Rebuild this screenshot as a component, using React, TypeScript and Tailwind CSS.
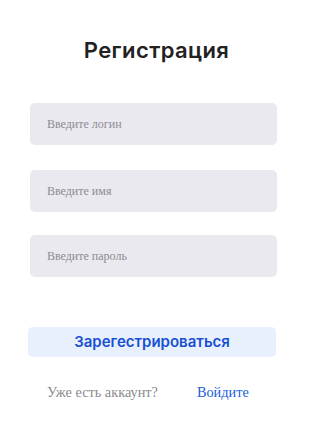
export default function App() {
  const fields = ["Введите логин", "Введите имя", "Введите пароль"];
  return (
    <div className="w-[311px] h-[428px] bg-white relative">
      <h1 className="pt-[36px] pl-[2px] text-center text-[22px] leading-[28px] font-semibold text-[#222] tracking-[0.4px] [font-family:Inter,'Noto_Sans',sans-serif]">
        Регистрация
      </h1>
      <div className="ml-[30px] mt-[39px] w-[247px] flex flex-col">
        <input
          placeholder={fields[0]}
          className="h-[42px] rounded-[5px] bg-[#eae9ef] pl-[17px] text-[12px] outline-none placeholder:text-[#8c8c92] [font-family:'Liberation_Serif',serif]"
        />
        <input
          placeholder={fields[1]}
          className="mt-[25px] h-[42px] rounded-[5px] bg-[#eae9ef] pl-[17px] text-[12px] outline-none placeholder:text-[#8c8c92] [font-family:'Liberation_Serif',serif]"
        />
        <input
          placeholder={fields[2]}
          className="mt-[23px] h-[42px] rounded-[5px] bg-[#eae9ef] pl-[17px] text-[12px] outline-none placeholder:text-[#8c8c92] [font-family:'Liberation_Serif',serif]"
        />
      </div>
      <button className="ml-[28px] mt-[50px] w-[248px] h-[30px] rounded-[5px] bg-[#e8f0fe] text-[#1850d0] text-[15px] font-semibold [font-family:Inter,'Noto_Sans',sans-serif]">
        Зарегестрироваться
      </button>
      <div className="mt-[25px] flex items-center text-[14.3px] [font-family:'Liberation_Serif',serif]">
        <span className="ml-[47px] text-[#8a8a8f]">Уже есть аккаунт?</span>
        <a className="ml-[39px] text-[#1a5fd6]">Войдите</a>
      </div>
    </div>
  );
}
